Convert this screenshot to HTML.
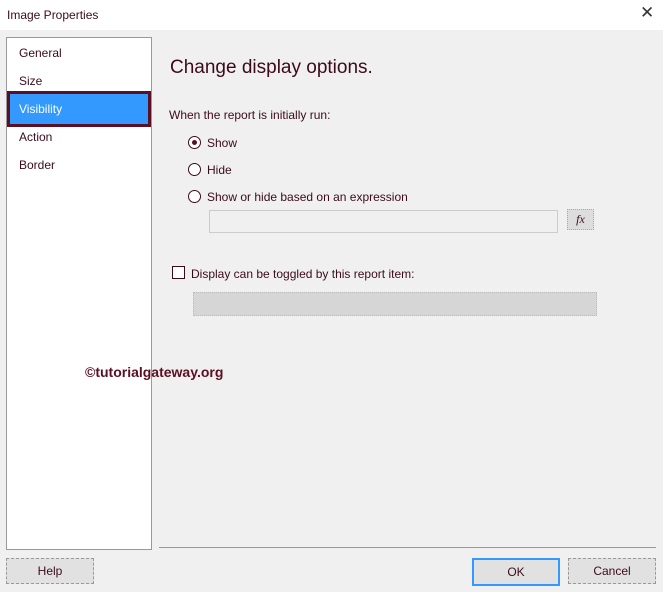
<!DOCTYPE html>
<html><head><style>
body{margin:0;width:663px;height:592px;background:#f0f0f0;font-family:"Liberation Sans",sans-serif;font-size:12px;color:#3b0b1c;position:relative;overflow:hidden}
.a{position:absolute}
.btn{position:absolute;height:24px;border:1px dashed #999;background:#e1e1e1;text-align:center;line-height:24px;font-size:12px}
.radio{position:absolute;width:11px;height:11px;border:1px solid #3b0b1c;border-radius:50%;background:#fff}
</style></head><body>
<div class="a" style="left:0;top:0;width:663px;height:30px;background:#fff"></div>
<div class="a" style="left:7px;top:8px;font-size:12px">Image Properties</div>
<div class="a" style="left:640px;top:3px;font-size:17px;color:#333">✕</div>
<div class="a" style="left:6px;top:37px;width:144px;height:511px;background:#fff;border:1px solid #999"></div>
<div class="a" style="left:19px;top:46px">General</div>
<div class="a" style="left:19px;top:74px">Size</div>
<div class="a" style="left:7px;top:91px;width:138px;height:30px;background:#3399ff;border:3px solid #5a0f22"></div>
<div class="a" style="left:19px;top:102px;color:#fff">Visibility</div>
<div class="a" style="left:19px;top:130px">Action</div>
<div class="a" style="left:19px;top:158px">Border</div>
<div class="a" style="left:170px;top:57px;font-size:19px">Change display options.</div>
<div class="a" style="left:169px;top:108px">When the report is initially run:</div>
<div class="radio" style="left:188px;top:136px"></div><div class="a" style="left:192px;top:140px;width:5px;height:5px;border-radius:50%;background:#5a0f22"></div>
<div class="a" style="left:207px;top:136px">Show</div>
<div class="radio" style="left:188px;top:163px"></div><div class="a" style="left:207px;top:163px">Hide</div>
<div class="radio" style="left:188px;top:190px"></div><div class="a" style="left:207px;top:190px">Show or hide based on an expression</div>
<div class="a" style="left:209px;top:210px;width:347px;height:21px;background:#f0f0f0;border:1px solid #ccc"></div>
<div class="a" style="left:567px;top:209px;width:25px;height:19px;background:#ddd;border:1px dotted #aaa;font-style:italic;font-family:'Liberation Serif',serif;text-align:center;line-height:19px;font-size:12px">fx</div>
<div class="a" style="left:172px;top:266px;width:11px;height:11px;border:1px solid #3b0b1c;background:#fff"></div>
<div class="a" style="left:191px;top:267px">Display can be toggled by this report item:</div>
<div class="a" style="left:193px;top:292px;width:402px;height:22px;background:#d6d6d6;border:1px dotted #bbb"></div>
<div class="a" style="left:85px;top:364px;font-size:14px;font-weight:bold;color:#5a0f22">©tutorialgateway.org</div>
<div class="a" style="left:159px;top:547px;width:497px;height:1px;background:#999"></div>
<div class="btn" style="left:6px;top:558px;width:86px">Help</div>
<div class="btn" style="left:472px;top:558px;width:84px;border:2px solid #3399ff">OK</div>
<div class="btn" style="left:568px;top:558px;width:86px">Cancel</div>
</body></html>
